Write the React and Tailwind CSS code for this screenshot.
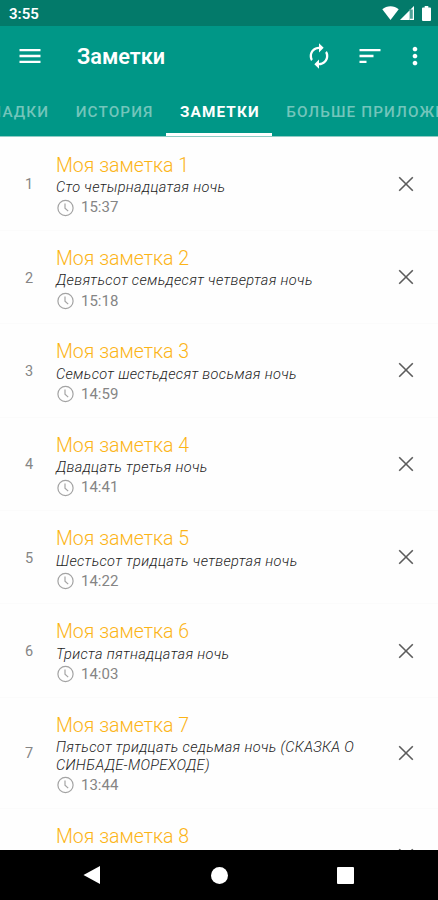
import React from "react";
import clsx from "clsx";
import { MdAutorenew, MdMenu, MdMoreVert, MdSort } from "react-icons/md";

const notes = [
  { id: 1, text: "Сто четырнадцатая ночь", time: "15:37" },
  { id: 2, text: "Девятьсот семьдесят четвертая ночь", time: "15:18" },
  { id: 3, text: "Семьсот шестьдесят восьмая ночь", time: "14:59" },
  { id: 4, text: "Двадцать третья ночь", time: "14:41" },
  { id: 5, text: "Шестьсот тридцать четвертая ночь", time: "14:22" },
  { id: 6, text: "Триста пятнадцатая ночь", time: "14:03" },
  {
    id: 7,
    text: "Пятьсот тридцать седьмая ночь (СКАЗКА О СИНБАДЕ-МОРЕХОДЕ)",
    time: "13:44",
    tall: true,
  },
];

const StatusBar = () => (
  <div className="h-[26px] shrink-0 bg-[#037a6a] flex items-center justify-between pl-[9px] pr-[7px] text-white">
    <span className="text-[15px] leading-none font-semibold pt-[3px]">3:55</span>
    <div className="flex items-center gap-[1px]">
      <svg width="17" height="14" viewBox="0 0 17 14" fill="currentColor">
        <path d="M8.5 14 0.3 3.3C2.6 1.3 5.4 0.2 8.5 0.2s5.9 1.1 8.2 3.1z" />
      </svg>
      <svg width="15" height="14" viewBox="0 0 15 14" fill="currentColor">
        <path d="M0 14 14 0v14z" fillOpacity="0.3" />
        <path d="M0 14 14 0v3.5h-4.4V14z" />
        <path d="M12.8 3H14v11h-4v-1.2h2.8z" />
      </svg>
      <svg width="9" height="15" viewBox="0 0 9 15" fill="currentColor" className="ml-[6px]">
        <path d="M2.7 0h3.6v1.6h1.7a1 1 0 0 1 1 1V14a1 1 0 0 1-1 1H1a1 1 0 0 1-1-1V2.6a1 1 0 0 1 1-1h1.7z" />
      </svg>
    </div>
  </div>
);

const Tab = ({ label, active }) => (
  <div
    className={clsx(
      "h-full shrink-0 pl-[14px] pr-[12.5px] flex items-center whitespace-nowrap border-b-[3px] pt-[6px]",
      active ? "text-white border-white font-bold" : "text-[#73c5bb] border-transparent font-medium"
    )}
  >
    {label}
  </div>
);

const CloseIcon = () => (
  <svg
    width="16"
    height="16"
    viewBox="0 0 16 16"
    stroke="#5c5c5c"
    strokeWidth="1.6"
    className="ml-[37px] shrink-0"
  >
    <path d="M1.2 1.2 14.8 14.8M14.8 1.2 1.2 14.8" />
  </svg>
);

const NoteItem = ({ note }) => (
  <div
    className={clsx(
      "w-full shrink-0 flex items-center border-b border-[#fbfbfb]",
      note.tall ? "h-[110.7px]" : "h-[93.4px]"
    )}
  >
    <span className="w-[56px] shrink-0 text-center text-[14.5px] text-[#858585] pl-[2px] pt-[3px]">
      {note.id}
    </span>
    <div className="h-full w-[305px] shrink-0 pt-[15px]">
      <h2 className="text-[19.5px] leading-[25px] text-[#fcb416] font-light">
        Моя заметка {note.id}
      </h2>
      <p className="text-[14.5px] leading-[17.5px] mt-[1.5px] italic font-light tracking-[0.35px] text-[#1c1c1c]">
        {note.text}
      </p>
      <div className="flex items-center gap-[7px] h-[20px] mt-[1px] text-[15px] text-[#858585]">
        <svg width="18" height="18" viewBox="0 0 18 18" fill="none" stroke="#a3a3a3" strokeWidth="1.2">
          <circle cx="9.5" cy="9" r="7.6" />
          <path d="M9 4.5v4.7l3.2 2.9" />
        </svg>
        {note.time}
      </div>
    </div>
    <CloseIcon />
  </div>
);

const App = () => {
  return (
    <div className="w-full h-screen flex flex-col overflow-hidden bg-[#fefefe] font-['Roboto',sans-serif]">
      <StatusBar />
      <header className="h-[111px] shrink-0 bg-[#009787] text-white flex flex-col border-b border-[#8fccc5]">
        <div className="h-[61px] flex items-center pl-[16px] pr-[10px]">
          <MdMenu size={28} />
          <h1 className="ml-[33px] text-[21.7px] font-semibold leading-none pt-[1px]">Заметки</h1>
          <div className="ml-auto flex items-center">
            <MdAutorenew size={28} />
            <MdSort size={28} className="ml-[23px]" />
            <MdMoreVert size={28} className="ml-[17px] -mr-[1px]" />
          </div>
        </div>
        <div className="h-[50px] shrink-0 flex overflow-hidden text-[15.3px] tracking-[1.1px]">
          <div className="w-[61.7px] h-full shrink-0 flex justify-end">
            <Tab label="ЗАКЛАДКИ" />
          </div>
          <Tab label="ИСТОРИЯ" />
          <Tab label="ЗАМЕТКИ" active />
          <Tab label="БОЛЬШЕ ПРИЛОЖЕНИЙ" />
        </div>
      </header>
      <main className="flex-1 min-h-0 flex flex-col overflow-hidden pt-[0.5px]">
        {notes.map((note) => (
          <NoteItem key={note.id} note={note} />
        ))}
        {/* next row, only its top is on screen */}
        <div className="w-full h-[95px] shrink-0 flex items-center pl-[56px]">
          <h2 className="h-full w-[305px] shrink-0 pt-[15px] text-[19.5px] leading-[25px] text-[#fcb416] font-light">
            Моя заметка 8
          </h2>
          <CloseIcon />
        </div>
      </main>
      <nav className="h-[50px] shrink-0 bg-black flex items-center justify-between pl-[83px] pr-[84px]">
        <svg width="18" height="20" viewBox="0 0 18 20" fill="white">
          <path d="M0.5 10 17 1v18z" />
        </svg>
        <div className="w-[17px] h-[17px] rounded-full bg-white" />
        <div className="w-[17px] h-[17px] rounded-[1px] bg-white" />
      </nav>
    </div>
  );
};

export default App;
